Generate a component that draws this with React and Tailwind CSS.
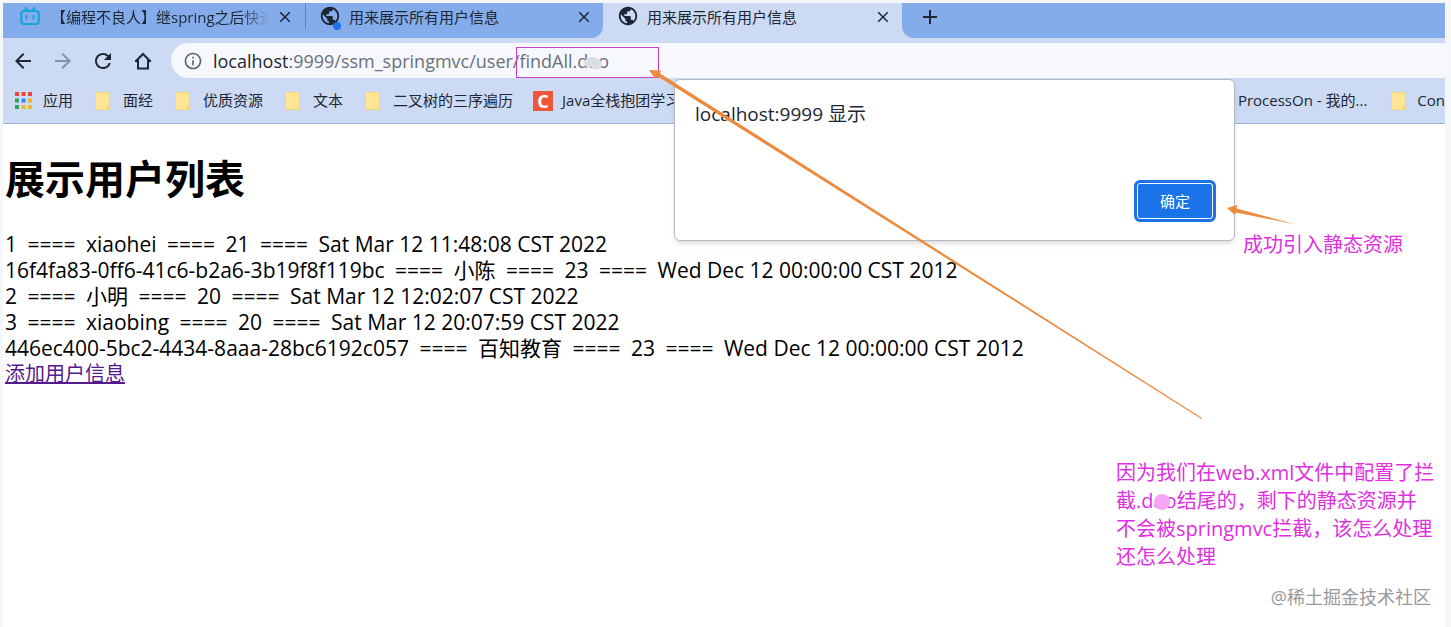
import { Fragment } from "react";
import { MdArrowBack, MdArrowForward, MdRefresh, MdInfoOutline, MdClose, MdAdd, MdPublic } from "react-icons/md";

const users = [
  ["1", "xiaohei", "21", "Sat Mar 12 11:48:08 CST 2022"],
  ["16f4fa83-0ff6-41c6-b2a6-3b19f8f119bc", "小陈", "23", "Wed Dec 12 00:00:00 CST 2012"],
  ["2", "小明", "20", "Sat Mar 12 12:02:07 CST 2022"],
  ["3", "xiaobing", "20", "Sat Mar 12 20:07:59 CST 2022"],
  ["446ec400-5bc2-4434-8aaa-28bc6192c057", "百知教育", "23", "Wed Dec 12 00:00:00 CST 2012"],
];

const folders = ["面经", "优质资源", "文本", "二叉树的三序遍历"];

const appColors = ["#e8453c", "#e8453c", "#e8453c", "#34a066", "#2f86f6", "#f0b429", "#34a066", "#f0b429", "#f0b429"];

const BiliIcon = () => (
  <svg width="20" height="20" viewBox="0 0 20 20" fill="none" stroke="#16a5dc" strokeWidth="2.2" strokeLinecap="round">
    <path d="M5.5 1 7.5 3.5M14.5 1 12.5 3.5" />
    <rect x="1.2" y="4" width="17.6" height="13" rx="3" />
    <path d="M6.500 9v2.500M13.500 9v2.500" />
  </svg>
);

const HomeIcon = () => (
  <svg width="24" height="24" viewBox="0 0 24 24" fill="none" stroke="currentColor" strokeWidth="2">
    <path d="M4.300 12.800 12 5l7.700 7.800" />
    <path d="M4.500 12h2.500v7.500h10V12h2.500" />
  </svg>
);

const FolderIcon = () => (
  <svg width="16" height="18" viewBox="0 0 16 18" className="shrink-0">
    <rect x="0.500" y="0.500" width="14" height="17" rx="1" fill="#ffe594" stroke="#f7d774" />
    <path d="M12 17.500v-4h3v4z" fill="#fbd765" />
  </svg>
);

const AppsIcon = () => (
  <svg width="17" height="17" viewBox="0 0 17 17" className="shrink-0">
    {appColors.map((color, i) => (
      <rect key={i} x={(i % 3) * 6.5} y={Math.floor(i / 3) * 6.5} width="4" height="4" fill={color} />
    ))}
  </svg>
);

const CloseButton = () => (
  <button type="button" aria-label="关闭" className="shrink-0 pt-[5px] leading-none">
    <MdClose size={18} />
  </button>
);

const App = () => {
  return (
    <div className="relative min-h-screen overflow-hidden bg-[#f5f7fb] pl-[3px] pr-[6px] pt-[3px] font-['Open_Sans','Noto_Sans_CJK_SC',sans-serif] text-[#1d2733]">
      <div className="min-h-[624px] bg-white">
        {/* Tabs */}
        <div className="flex h-[35px] bg-[#ccdaf4] text-[15px] leading-7">
          <div className="flex w-[600px] rounded-br-xl bg-[#84abea]">
            <div className="flex w-[302px] items-start pl-[17px]">
              <span className="mr-[11px] shrink-0 pt-1"><BiliIcon /></span>
              <span className="w-[225px] whitespace-nowrap [mask-image:linear-gradient(to_right,black_190px,transparent_218px)]">
                【编程不良人】继spring之后快速
              </span>
              <CloseButton />
            </div>
            <span className="h-[26px] w-px bg-[#5c7fb8]" />
            <div className="flex flex-1 items-start gap-2 pl-[13px] pr-[10px]">
              <span className="relative shrink-0 pt-[2px]">
                <MdPublic size={22} />
                <span className="absolute left-[14px] top-[19px] h-2 w-2 rounded-full bg-[#1a73e8]" />
              </span>
              <span className="flex-1">用来展示所有用户信息</span>
              <CloseButton />
            </div>
          </div>
          <div className="flex w-[299px] items-start gap-2 pl-[14px] pr-[10px]">
            <span className="pt-[2px]"><MdPublic size={22} /></span>
            <span className="flex-1">用来展示所有用户信息</span>
            <CloseButton />
          </div>
          <div className="flex flex-1 items-start rounded-bl-xl bg-[#84abea] pl-4 pt-[2px]">
            <button type="button" aria-label="新标签页"><MdAdd size={24} /></button>
          </div>
        </div>

        {/* Address bar */}
        <div className="flex h-10 items-center gap-4 bg-[#ccdaf4] pl-2 pt-[5px]">
          <button type="button" aria-label="后退"><MdArrowBack size={24} /></button>
          <button type="button" aria-label="前进" className="text-[#8391a9]"><MdArrowForward size={24} /></button>
          <button type="button" aria-label="刷新"><MdRefresh size={24} /></button>
          <button type="button" aria-label="主页"><HomeIcon /></button>
          <label className="flex h-[35px] flex-1 items-center rounded-l-full bg-[#f6f8fd] pl-3 text-lg">
            <MdInfoOutline size={20} className="mr-[10px] text-[#5c6470]" />
            <span>localhost</span>
            <input
              type="text"
              aria-label="地址"
              defaultValue=":9999/ssm_springmvc/user/findAll.dao"
              className="min-w-0 flex-1 bg-transparent text-[#6b7079] outline-none"
            />
          </label>
        </div>

        {/* Bookmarks */}
        <div className="flex h-[46px] items-center whitespace-nowrap border-b border-[#9db3dc] bg-[#ccdaf4] pl-3 text-[15px]">
          <a href="#apps" className="flex items-center gap-[11px]"><AppsIcon />应用</a>
          {folders.map((name) => (
            <a key={name} href="#folder" className="ml-[22px] flex items-center gap-3">
              <FolderIcon />
              {name}
            </a>
          ))}
          <a href="#java" className="ml-5 flex items-center gap-[9px]">
            <span className="flex h-5 w-5 items-center justify-center bg-[#f0563a] text-lg font-bold leading-5 text-white">C</span>
            Java全栈抱团学习
          </a>
          <a href="#processon" className="ml-auto">ProcessOn - 我的...</a>
          <a href="#con" className="ml-6 flex items-center gap-[10px]"><FolderIcon />Con</a>
        </div>

        {/* Page */}
        <main className="pl-[2px] text-xl leading-[26px] text-black">
          <h1 className="pb-[25px] pt-7 text-[40px] font-bold leading-[54px]">展示用户列表</h1>
          <ul className="text-[21px] leading-[26px]">
            {users.map((user) => (
              <li key={user[0]} className="flex h-[26px] whitespace-pre">
                {user.map((field, i) => (
                  <Fragment key={i}>
                    {i > 0 && <span className="w-[69px] text-center"> ==== </span>}
                    <span>{field}</span>
                  </Fragment>
                ))}
              </li>
            ))}
          </ul>
          <a href="#add" className="text-[#551a8b] underline">添加用户信息</a>
        </main>
      </div>

      {/* Alert */}
      <div role="dialog" aria-label="localhost:9999 显示" className="absolute left-[674px] top-[79px] flex h-[162px] w-[561px] flex-col justify-between rounded-md border border-[#b5b9c0] bg-white pb-[18px] pl-5 pr-[18px] pt-5 shadow-md">
        <p className="text-[19px] leading-7">localhost:9999 显示</p>
        <button type="button" className="h-[42px] w-[82px] self-end rounded-md border-[3px] border-[#1a73e8] bg-[#1a73e8] text-[15px] text-white ring-1 ring-inset ring-white">
          确定
        </button>
      </div>

      {/* Annotations */}
      <div className="absolute left-[516px] top-[47px] h-[31px] w-[143px] border border-[#cc3fcc]" />
      <p className="absolute left-[1243px] top-[231px] text-xl leading-7 text-[#e02fe0]">成功引入静态资源</p>
      <p className="absolute left-[1116px] top-[459px] whitespace-nowrap text-xl leading-7 text-[#e02fe0]">
        因为我们在web.xml文件中配置了拦<br />
        截.dao结尾的，剩下的静态资源并<br />
        不会被springmvc拦截，该怎么处理<br />
        还怎么处理
      </p>
      <svg className="pointer-events-none absolute left-0 top-0" width="1451" height="627" viewBox="0 0 1451 627">
        <path d="M649 70 661 70.500 660 73.500 1202 418 1201.500 419 658 76.500 655 78.500z" fill="#ee8a3e" />
        <path d="M1227 208 1237 205 1236.500 208.500 1296 224.500 1236 212.500 1235 215z" fill="#ee8a3e" />
        <path d="M584 61q6-6 12-3 7 2 6 8-2 5-8 3-4-3-7-2-5-2-3-6z" fill="#dcdde1" />
        <circle cx="1162" cy="502" r="8" fill="#f5a6f5" />
      </svg>
      <p className="absolute bottom-4 right-5 text-lg leading-7 text-[#999999]">@稀土掘金技术社区</p>
    </div>
  );
};

export default App;
